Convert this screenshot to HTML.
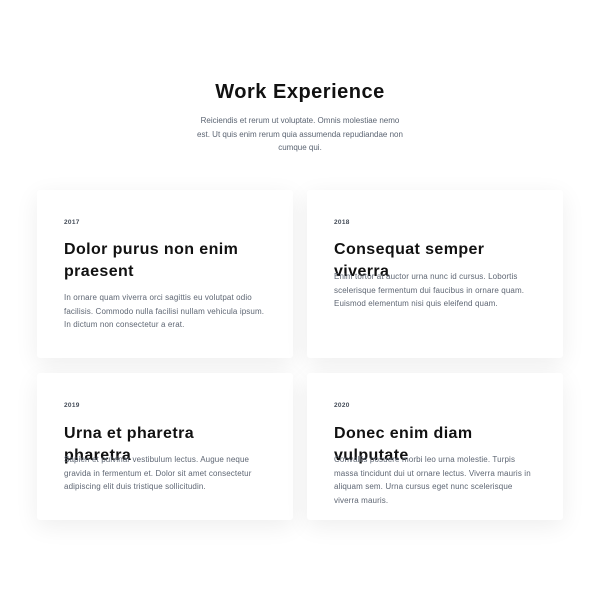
<!DOCTYPE html>
<html><head><style>
body{margin:0;width:600px;height:600px;background:#fff;font-family:"Liberation Sans",Arial,sans-serif;position:relative;overflow:hidden}
h1{position:absolute;top:80px;left:0;width:600px;margin:0;text-align:center;font-size:20px;font-weight:bold;color:#111;line-height:24px;letter-spacing:0.5px}
.sub{position:absolute;top:114px;left:194px;width:212px;text-align:center;font-size:8px;line-height:13.5px;color:#5b6472;margin:0}
.card{position:absolute;background:#fff;border-radius:3px;box-shadow:0 6px 24px rgba(0,0,0,0.07)}
.y{position:absolute;left:27px;font-size:6.5px;font-weight:bold;color:#444c58;letter-spacing:0.3px}
.t{position:absolute;left:27px;width:180px;font-size:16px;font-weight:bold;color:#111;line-height:22px;margin:0;letter-spacing:0.4px}
.p{position:absolute;left:27px;width:204px;font-size:8px;line-height:13.7px;color:#5e6673;margin:0;letter-spacing:0.12px}
</style></head><body>
<h1>Work Experience</h1>
<p class="sub">Reiciendis et rerum ut voluptate. Omnis molestiae nemo est. Ut quis enim rerum quia assumenda repudiandae non cumque qui.</p>

<div class="card" style="left:37px;top:190px;width:256px;height:168px">
<div class="y" style="top:29px">2017</div>
<div class="t" style="top:49px">Dolor purus non enim praesent</div>
<p class="p" style="top:101px">In ornare quam viverra orci sagittis eu volutpat odio facilisis. Commodo nulla facilisi nullam vehicula ipsum. In dictum non consectetur a erat.</p>
</div>

<div class="card" style="left:307px;top:190px;width:256px;height:168px">
<div class="y" style="top:29px">2018</div>
<div class="t" style="top:49px">Consequat semper viverra</div>
<p class="p" style="top:80px">Enim tortor at auctor urna nunc id cursus. Lobortis scelerisque fermentum dui faucibus in ornare quam. Euismod elementum nisi quis eleifend quam.</p>
</div>

<div class="card" style="left:37px;top:373px;width:256px;height:147px">
<div class="y" style="top:29px">2019</div>
<div class="t" style="top:50px">Urna et pharetra pharetra</div>
<p class="p" style="top:80px">Sapien et pulvinar vestibulum lectus. Augue neque gravida in fermentum et. Dolor sit amet consectetur adipiscing elit duis tristique sollicitudin.</p>
</div>

<div class="card" style="left:307px;top:373px;width:256px;height:147px">
<div class="y" style="top:29px">2020</div>
<div class="t" style="top:50px">Donec enim diam vulputate</div>
<p class="p" style="top:80px">Convallis posuere morbi leo urna molestie. Turpis massa tincidunt dui ut ornare lectus. Viverra mauris in aliquam sem. Urna cursus eget nunc scelerisque viverra mauris.</p>
</div>
</body></html>
